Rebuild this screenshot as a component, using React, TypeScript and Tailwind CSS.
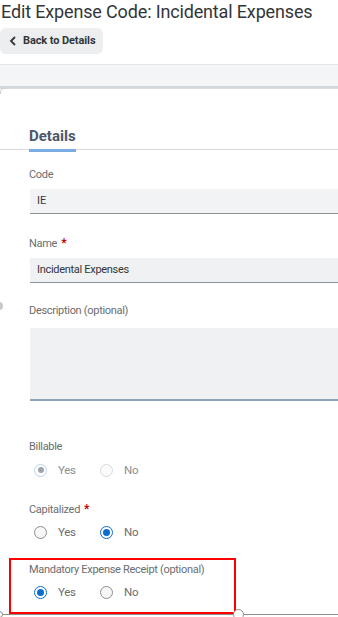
import React from "react";

function Radio({ state, label }: { state: "on" | "off" | "dis-on" | "dis-off"; label: string }) {
  let circle: React.ReactNode;
  if (state === "on") {
    circle = (
      <span className="w-[13px] h-[13px] rounded-full border-[1.5px] border-[#0a6ed1] bg-white flex items-center justify-center">
        <span className="w-[7px] h-[7px] rounded-full bg-[#0a6ed1]" />
      </span>
    );
  } else if (state === "off") {
    circle = <span className="w-[13px] h-[13px] rounded-full border border-[#8a8f94] bg-[#f7f7f7]" />;
  } else if (state === "dis-on") {
    circle = (
      <span className="w-[13px] h-[13px] rounded-full border border-[#b9d3ee] bg-white flex items-center justify-center">
        <span className="w-[6px] h-[6px] rounded-full bg-[#9fa3a7]" />
      </span>
    );
  } else {
    circle = <span className="w-[13px] h-[13px] rounded-full border border-[#d7dadd] bg-[#fbfbfb]" />;
  }
  return (
    <div className="flex items-center w-[66px] h-[14px]">
      <span className="w-[25px] flex justify-center">{circle}</span>
      <span className={`ml-[5px] text-[11.5px] leading-[14px] tracking-[-0.3px] ${state.startsWith("dis") ? "text-[#8a8d90]" : "text-[#6a6d70]"}`}>{label}</span>
    </div>
  );
}

function Label({ children, req }: { children: React.ReactNode; req?: boolean }) {
  return (
    <div className="text-[11px] leading-[16px] text-[#6a6d70] whitespace-nowrap tracking-[-0.3px]">
      {children}
      {req && <span className="text-[#bb0000] font-bold ml-[4px] text-[12px]">*</span>}
    </div>
  );
}

export default function App() {
  return (
    <div
      className="w-[338px] h-[617px] overflow-hidden bg-white relative text-[#32363a]"
      style={{ fontFamily: "Roboto, 'Noto Sans', sans-serif" }}
    >
      <div className="text-[18px] leading-[24px] whitespace-nowrap pl-[1px] tracking-[-0.15px]">
        Edit Expense Code: Incidental Expenses
      </div>
      <div className="mt-[4px] h-[26px] w-[103px] rounded-md bg-[#eceef0] flex items-center pl-[9px]">
        <svg width="8" height="10" viewBox="0 0 8 10" className="mr-[6px]">
          <path d="M6 1 L2 5 L6 9" fill="none" stroke="#32363a" strokeWidth="1.8" />
        </svg>
        <span className="text-[11px] font-bold text-[#32363a] whitespace-nowrap tracking-[-0.1px]">Back to Details</span>
      </div>
      <div className="mt-[10px] h-[24px] border-t border-[#e4e6e8] bg-[#f4f5f6] border-b-2 border-b-[#d3d8dc]" />
      <div className="bg-white border-t border-[#d9dde0] relative">
        <svg width="6" height="6" viewBox="0 0 6 6" className="absolute left-0 -top-px">
          <path d="M0.5 6 V4 Q0.5 0.5 4 0.5 H6" fill="none" stroke="#c9ced2" strokeWidth="1" />
        </svg>
        <div className="border-b border-[#d9d9d9] pt-[35px] h-[61px]">
          <div className="ml-[29px] inline-block text-[15px] font-bold text-[#4a586b] leading-[20px] pb-[3px] border-b-[3px] border-[#7aabe3]">
            Details
          </div>
        </div>
        <div className="pl-[29px]">
          <div className="mt-[17px]">
            <Label>Code</Label>
          </div>
          <div className="mt-[6px] ml-[1px] h-[25px] w-[330px] bg-[#f2f3f4] border-b border-[#8c9196] flex items-center pl-[7px] text-[11px] text-[#32363a]">
            IE
          </div>
          <div className="mt-[21px]">
            <Label req>Name</Label>
          </div>
          <div className="mt-[6px] ml-[1px] h-[25px] w-[330px] bg-[#eff1f2] border-b border-[#89919a] flex items-center pl-[7px] text-[11px] tracking-[-0.3px] text-[#32363a]">
            Incidental Expenses
          </div>
          <div className="mt-[20px]">
            <Label>Description (optional)</Label>
          </div>
          <div className="mt-[9px] ml-[1px] h-[73px] w-[330px] bg-[#eff1f2] border-b-2 border-[#8fa3b8]" />
          <div className="mt-[38px]">
            <Label>Billable</Label>
          </div>
          <div className="mt-[8px] flex -ml-[1px]">
            <Radio state="dis-on" label="Yes" />
            <Radio state="dis-off" label="No" />
          </div>
          <div className="mt-[24px]">
            <Label req>Capitalized</Label>
          </div>
          <div className="mt-[7px] flex -ml-[1px]">
            <Radio state="off" label="Yes" />
            <Radio state="on" label="No" />
          </div>
        </div>
        <div className="mt-[19px] ml-[9px] w-[227px] h-[56px] border-2 border-[#ff0000] pl-[18px] pt-[2px]">
          <Label>Mandatory Expense Receipt (optional)</Label>
          <div className="mt-[7px] flex -ml-[1px]">
            <Radio state="on" label="Yes" />
            <Radio state="off" label="No" />
          </div>
        </div>
      </div>
      <div className="absolute left-0 right-0 top-[614px] h-px bg-[#8e8e8e]" />
      <div className="absolute left-[233px] top-[609px] w-[11px] h-[11px] rounded-full border border-[#8e8e8e] bg-white" />
      <div className="absolute left-[-4px] top-[611px] w-[7px] h-[7px] rounded-full border border-[#8e8e8e] bg-white" />
      <div className="absolute left-[-5px] top-[302px] w-[8px] h-[8px] rounded-full bg-[#c8c8c8]" />
    </div>
  );
}
